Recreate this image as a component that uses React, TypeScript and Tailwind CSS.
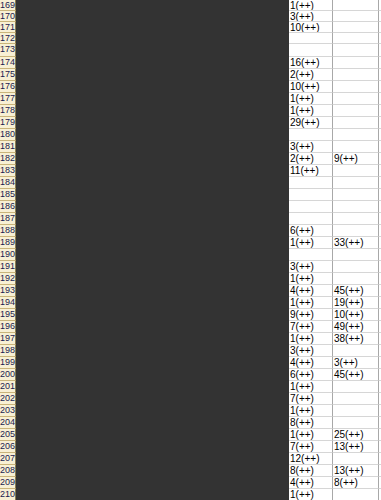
import React from "react";

const data: [number, string, string][] = [
  [169, "1(++)", ""],
  [170, "3(++)", ""],
  [171, "10(++)", ""],
  [172, "", ""],
  [173, "", ""],
  [174, "16(++)", ""],
  [175, "2(++)", ""],
  [176, "10(++)", ""],
  [177, "1(++)", ""],
  [178, "1(++)", ""],
  [179, "29(++)", ""],
  [180, "", ""],
  [181, "3(++)", ""],
  [182, "2(++)", "9(++)"],
  [183, "11(++)", ""],
  [184, "", ""],
  [185, "", ""],
  [186, "", ""],
  [187, "", ""],
  [188, "6(++)", ""],
  [189, "1(++)", "33(++)"],
  [190, "", ""],
  [191, "3(++)", ""],
  [192, "1(++)", ""],
  [193, "4(++)", "45(++)"],
  [194, "1(++)", "19(++)"],
  [195, "9(++)", "10(++)"],
  [196, "7(++)", "49(++)"],
  [197, "1(++)", "38(++)"],
  [198, "3(++)", ""],
  [199, "4(++)", "3(++)"],
  [200, "6(++)", "45(++)"],
  [201, "1(++)", ""],
  [202, "7(++)", ""],
  [203, "1(++)", ""],
  [204, "8(++)", ""],
  [205, "1(++)", "25(++)"],
  [206, "7(++)", "13(++)"],
  [207, "12(++)", ""],
  [208, "8(++)", "13(++)"],
  [209, "4(++)", "8(++)"],
  [210, "1(++)", ""],
];

export default function App() {
  return (
    <div
      className="w-[381px] h-[500px] overflow-hidden bg-white flex flex-col"
      style={{ fontFamily: '"Liberation Sans", Arial, sans-serif' }}
    >
      {data.map(([n, a, b], i) => (
        <div
          key={n}
          className={`flex shrink-0 ${i < 4 ? "h-[11px]" : i === 4 ? "h-[13px]" : "h-[12px]"}`}
        >
          <div className="w-[16px] shrink-0 bg-[#f8f0d4] border-b border-[#c9b47a] border-r border-r-[#8a7a50] text-[9px] leading-[10px] font-medium text-[#1a1a50] flex justify-end whitespace-nowrap">
            {n}
          </div>
          <div className="flex-1 bg-[#333333]" />
          <div className="w-[44px] shrink-0 border-b border-[#d6d6d6] border-r border-r-[#a8a8a8] text-[10px] leading-[11px] text-black pl-[1px] whitespace-nowrap overflow-hidden">
            {a}
          </div>
          <div className="w-[46px] shrink-0 border-b border-[#d6d6d6] border-r border-r-[#a8a8a8] text-[10px] leading-[11px] text-black pl-[1px] whitespace-nowrap overflow-hidden">
            {b}
          </div>
          <div className="w-[2px] shrink-0 border-b border-[#d6d6d6]" />
        </div>
      ))}
    </div>
  );
}
